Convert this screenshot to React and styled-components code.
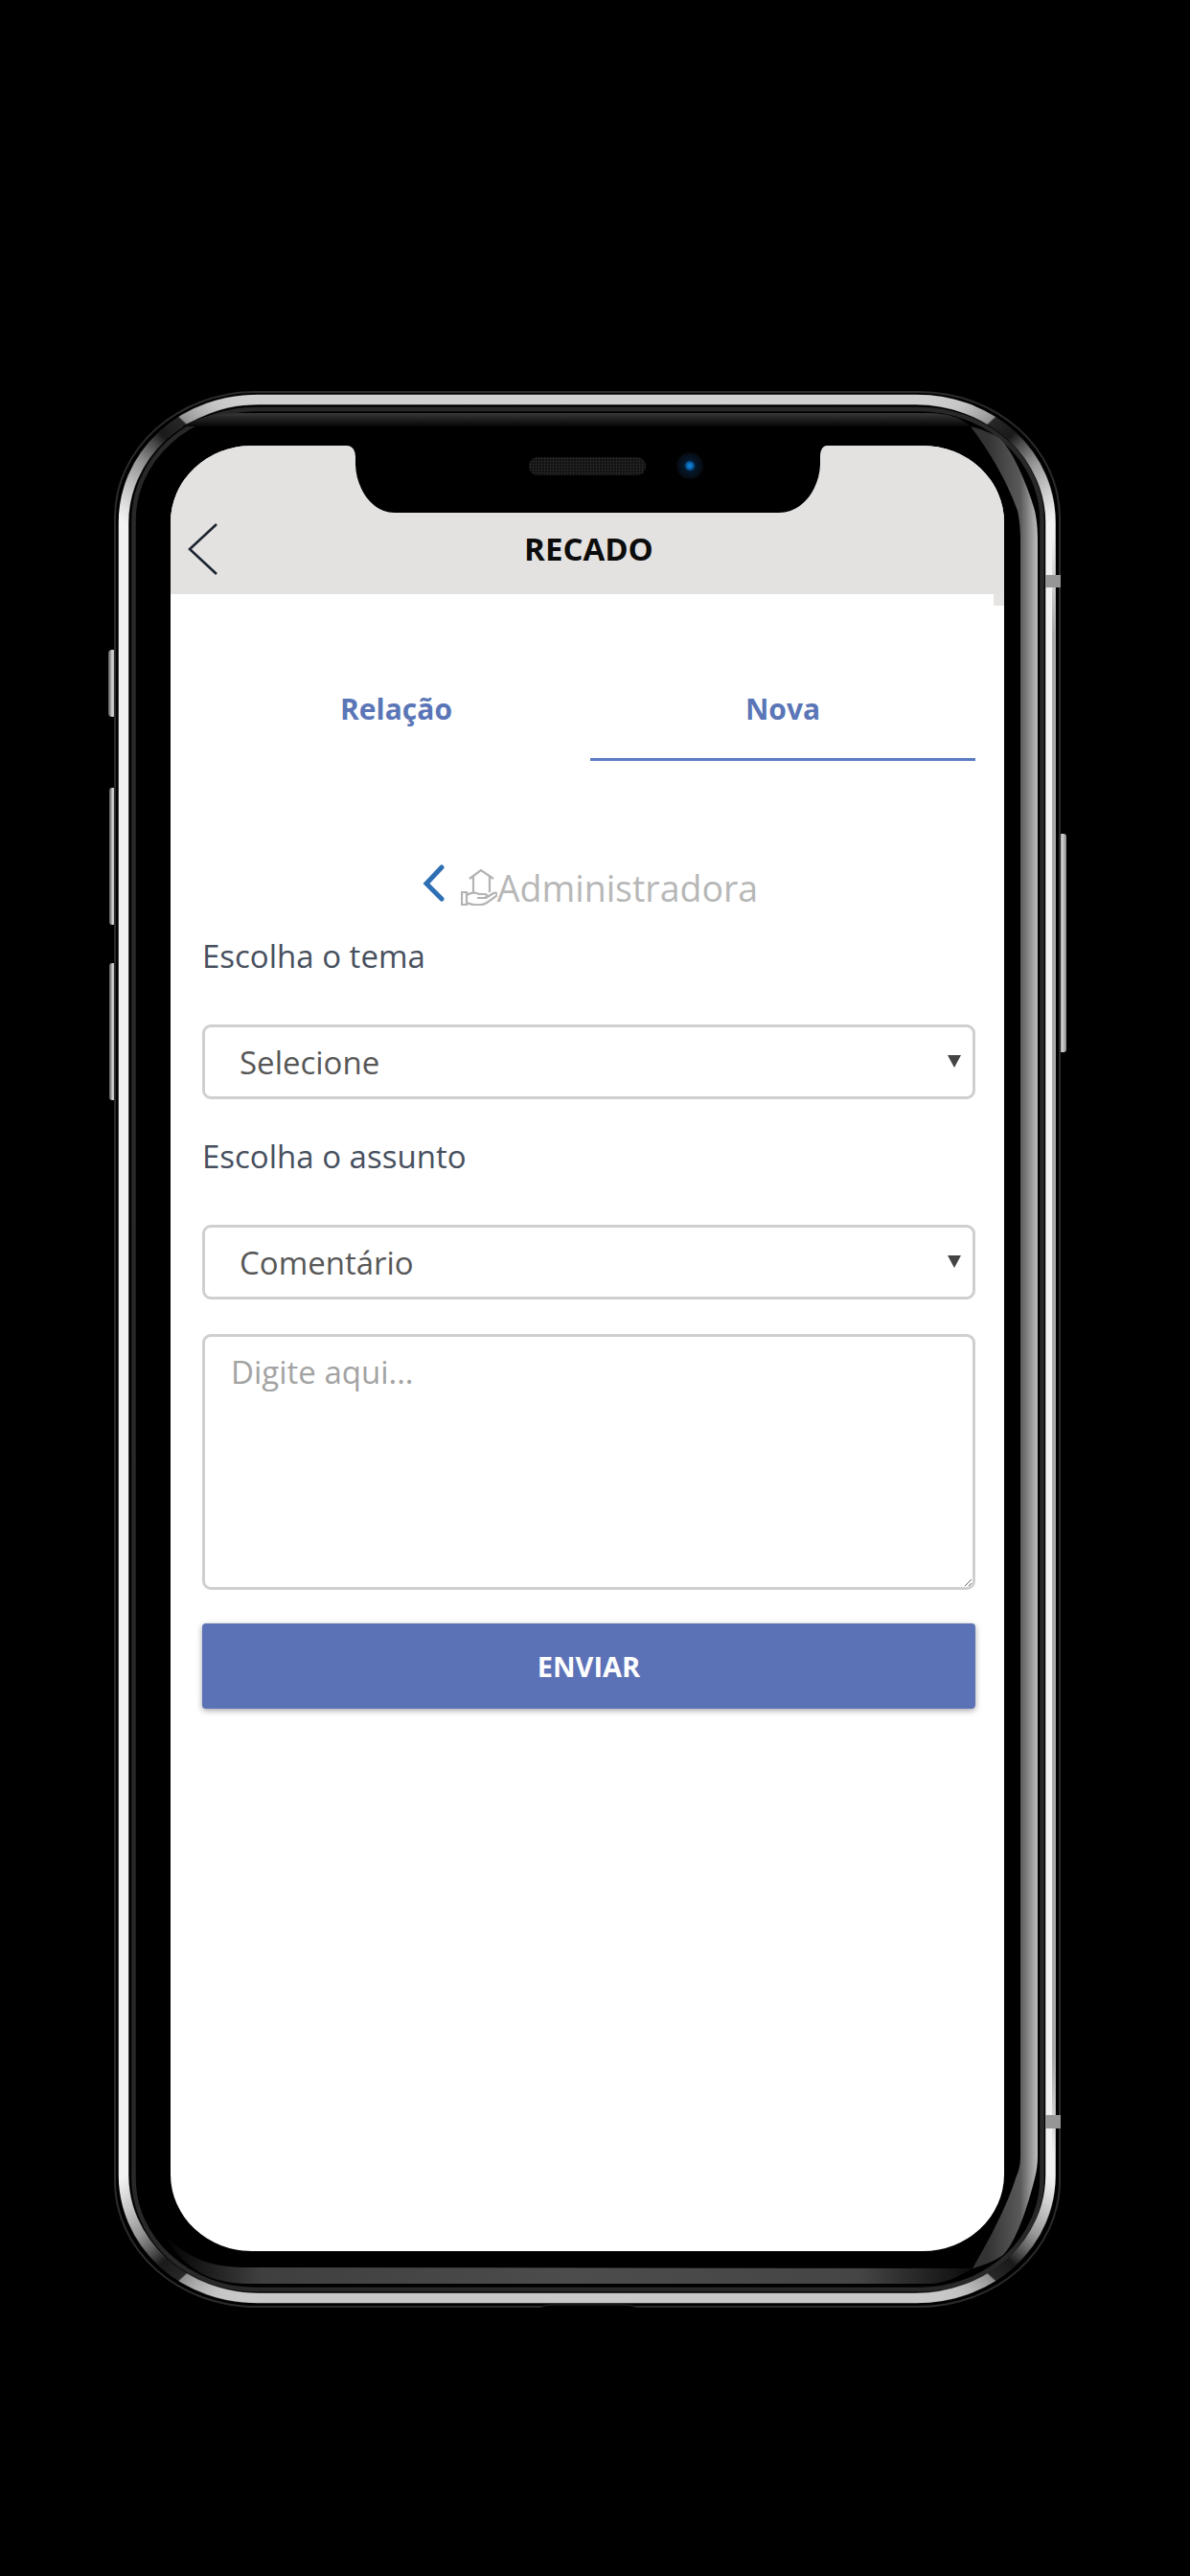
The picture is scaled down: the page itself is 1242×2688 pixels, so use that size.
import React from "react";
import styled, { createGlobalStyle } from "styled-components";

const brand = "#5c72b7";
const tabBlue = "#5a76b7";

const GlobalStyle = createGlobalStyle`
  html, body {
    margin: 0;
    padding: 0;
    background: #000;
  }
  * {
    box-sizing: border-box;
  }
`;

const Page = styled.div`
  width: 1242px;
  height: 2688px;
  padding: 408px 0 0 113px;
  background: #000;
  overflow: hidden;
  font-family: "Open Sans", "Noto Sans", sans-serif;
`;

const Phone = styled.div`
  position: relative;
  width: 1000px;
  height: 2000px;
  padding: 57px 65px 59px 65px;
`;

const FrameArt = styled.svg`
  position: absolute;
  top: 0;
  left: 0;
  width: 1000px;
  height: 2000px;
`;

const Screen = styled.div`
  position: relative;
  width: 870px;
  height: 1884px;
  background: #fff;
  border-radius: 85px / 80px;
  overflow: hidden;
`;

const NotchArt = styled.svg`
  position: absolute;
  top: 0;
  left: 184px;
  width: 501px;
  height: 70px;
`;

const Header = styled.header`
  position: relative;
  height: 155px;
  padding-top: 61px;
  display: grid;
  grid-template-columns: 1fr auto 1fr;
  align-items: center;
  background: #e4e2e0;

  &::after {
    content: "";
    position: absolute;
    right: 0;
    top: 155px;
    width: 11px;
    height: 12px;
    background: #e6e4e2;
  }
`;

const BackButton = styled.svg`
  width: 32px;
  height: 56px;
  margin-left: 17px;
`;

const Title = styled.h1`
  margin: 0 0 0 3px;
  font-size: 33px;
  line-height: 44px;
  font-weight: 700;
  color: #0c0c0c;
`;

const Content = styled.main`
  padding: 74px 30px 0 33px;
`;

const Tabs = styled.nav`
  display: grid;
  grid-template-columns: 405px 402px;
`;

const Tab = styled.div`
  height: 100px;
  padding-top: 24px;
  text-align: center;
  font-size: 30px;
  line-height: 44px;
  font-weight: 700;
  color: ${tabBlue};
  border-bottom: 3px solid ${(props) => (props.$active ? "#5a7cc0" : "transparent")};
`;

const Crumb = styled.div`
  display: flex;
  justify-content: center;
  align-items: center;
  height: 56px;
  margin-top: 104px;
  padding-left: 3px;
  font-size: 37.5px;
  color: #b7b7b7;
`;

const CrumbBack = styled.svg`
  width: 24px;
  height: 40px;
  margin-right: 16px;
  margin-bottom: 8px;
`;

const CrumbIcon = styled.svg`
  width: 38px;
  height: 38px;
`;

const Label = styled.label`
  display: block;
  font-size: 33px;
  line-height: 44px;
  color: #47505e;
  margin: ${(props) => (props.$first ? "22px" : "38px")} 0 49px;
`;

const SelectBox = styled.div`
  position: relative;
  height: 78px;
`;

const Select = styled.select`
  display: block;
  width: 100%;
  height: 100%;
  padding: 0 0 0 36px;
  appearance: none;
  background: #fff;
  border: 3px solid #cfcfcf;
  border-radius: 9px;
  font-family: inherit;
  font-size: 33px;
  color: #575757;
`;

const Caret = styled.svg`
  position: absolute;
  right: 15px;
  top: 32px;
  width: 14px;
  height: 13px;
`;

const MessageBox = styled.textarea`
  display: block;
  width: 100%;
  height: 267px;
  margin-top: 36px;
  padding: 15px 27px;
  background: #fff;
  border: 3px solid #cfcfcf;
  border-radius: 9px;
  outline: none;
  font-family: inherit;
  font-size: 33px;
  line-height: 44px;
  color: #555;

  &::placeholder {
    color: #a3a3a3;
    opacity: 1;
  }
`;

const SendButton = styled.button`
  display: block;
  width: 100%;
  height: 89px;
  margin-top: 35px;
  border: 0;
  border-radius: 4px;
  background: ${brand};
  box-shadow: 0 2px 6px rgba(0, 0, 0, 0.35);
  color: #fff;
  font-family: inherit;
  font-size: 29px;
  font-weight: 700;
`;

// shaded part of the metal band at each corner, drawn once and mirrored
const Corner = ({ transform }) => (
  <path
    d="M129 545 A140 128 0 0 1 269 417"
    fill="none"
    stroke="url(#cornerShade)"
    strokeWidth="11.5"
    transform={transform}
  />
);

const PhoneFrame = () => (
  <FrameArt viewBox="113 408 1000 2000">
    <defs>
      <linearGradient id="band" x1="0" y1="0" x2="0" y2="1">
        <stop offset="0" stopColor="#cfcfcf" />
        <stop offset="0.06" stopColor="#f2f2f2" />
        <stop offset="0.94" stopColor="#f2f2f2" />
        <stop offset="1" stopColor="#c9c9c9" />
      </linearGradient>
      <linearGradient id="bandShade" x1="0" y1="0" x2="0" y2="1">
        <stop offset="0" stopColor="#a8a8a8" stopOpacity="0" />
        <stop offset="0.06" stopColor="#a8a8a8" />
        <stop offset="0.94" stopColor="#a8a8a8" />
        <stop offset="1" stopColor="#a8a8a8" stopOpacity="0" />
      </linearGradient>
      <linearGradient id="cornerShade" x1="0" y1="1" x2="1" y2="0">
        <stop offset="0" stopColor="#999" stopOpacity="0" />
        <stop offset="0.3" stopColor="#777" stopOpacity="0.7" />
        <stop offset="0.5" stopColor="#141414" stopOpacity="0.97" />
        <stop offset="0.63" stopColor="#222" stopOpacity="0.97" />
        <stop offset="0.64" stopColor="#8a8a8a" stopOpacity="0.9" />
        <stop offset="0.82" stopColor="#bbb" stopOpacity="0.5" />
        <stop offset="1" stopColor="#ccc" stopOpacity="0" />
      </linearGradient>
      <linearGradient id="sideGlass" gradientUnits="userSpaceOnUse" x1="1030" y1="0" x2="1083" y2="0">
        <stop offset="0" stopColor="#333" />
        <stop offset="0.66" stopColor="#5a5a5a" />
        <stop offset="1" stopColor="#bdbdbd" />
      </linearGradient>
      <linearGradient id="bottomGlass" gradientUnits="userSpaceOnUse" x1="170" y1="0" x2="1015" y2="0">
        <stop offset="0" stopColor="#000" />
        <stop offset="0.12" stopColor="#3f3f3f" />
        <stop offset="0.5" stopColor="#4c4c4c" />
        <stop offset="0.86" stopColor="#454545" />
        <stop offset="1" stopColor="#0c0c0c" />
      </linearGradient>
      <linearGradient id="topGlass" x1="0" y1="0" x2="0" y2="1">
        <stop offset="0" stopColor="#383838" />
        <stop offset="1" stopColor="#050505" />
      </linearGradient>
      <linearGradient id="sideKey" x1="0" y1="0" x2="1" y2="0">
        <stop offset="0" stopColor="#555" />
        <stop offset="0.45" stopColor="#d4d4d4" />
        <stop offset="1" stopColor="#8a8a8a" />
      </linearGradient>
    </defs>

    <rect x="113" y="678" width="9" height="70" rx="4" fill="url(#sideKey)" />
    <rect x="114" y="822" width="8" height="143" rx="3" fill="url(#sideKey)" />
    <rect x="114" y="1005" width="8" height="143" rx="3" fill="url(#sideKey)" />
    <rect x="1105" y="870" width="8" height="228" rx="3" fill="url(#sideKey)" />

    <rect x="119" y="408" width="988" height="2000" rx="148" ry="132" fill="#2b2b2b" />
    <rect x="121" y="410" width="984" height="1996" rx="146" ry="130" fill="#000" />
    <rect x="129" y="417" width="967.5" height="1981" rx="140" ry="128" fill="none" stroke="url(#band)" strokeWidth="10.5" />
    <Corner />
    <Corner transform="translate(1225.5 0) scale(-1 1)" />
    <Corner transform="translate(0 2815) scale(1 -1)" />
    <Corner transform="translate(1225.5 2815) scale(-1 -1)" />
    <rect x="1098" y="560" width="4" height="1690" fill="url(#bandShade)" />

    <rect x="139.5" y="427" width="948" height="1962" rx="128" ry="116" fill="#000" stroke="#282828" strokeWidth="4.5" />

    <path
      d="M190 445 C205 436 225 431 260 431 L965 431 C990 431 1003 436 1013 445 Z"
      fill="url(#topGlass)"
    />
    <path
      d="M1013 445 C1033 472 1050 500 1062 533 C1064 542 1065 552 1065 565 L1065 2250 C1065 2262 1062 2268 1060 2273 C1055 2290 1040 2325 1015 2367 C1030 2363 1040 2358 1047 2353 C1060 2340 1072 2305 1080 2273 C1082 2265 1083 2258 1083 2250 L1083 565 C1083 552 1082 542 1080 533 C1075 515 1060 473 1043 457 C1035 452 1025 448 1013 445 Z"
      fill="url(#sideGlass)"
    />
    <path
      d="M170 2330 C190 2352 215 2366 255 2366 L1015 2367 C1000 2376 985 2383 970 2383 L260 2383 C215 2383 190 2365 170 2330 Z"
      fill="url(#bottomGlass)"
    />

    <rect x="1091" y="600" width="16" height="13" fill="#969696" />
    <rect x="1091" y="2207" width="16" height="14" fill="#969696" />
    <path d="M564 2408 C570 2404 575 2405 580 2405 L648 2405 C654 2405 658 2404 664 2408" fill="#000" stroke="#1d1d1d" strokeWidth="1.5" />
  </FrameArt>
);

const Notch = () => (
  <NotchArt viewBox="362 465 501 70">
    <defs>
      <pattern id="mesh" width="3" height="3" patternUnits="userSpaceOnUse">
        <rect width="3" height="3" fill="#111" />
        <circle cx="1.5" cy="1.5" r="0.9" fill="#2c2c2c" />
      </pattern>
      <radialGradient id="lens">
        <stop offset="0" stopColor="#1290e6" />
        <stop offset="0.25" stopColor="#0a5ea6" />
        <stop offset="0.42" stopColor="#03192d" />
        <stop offset="1" stopColor="#07090f" />
      </radialGradient>
    </defs>
    <path
      d="M362 465 C367 465 371 469 371 477 L371 485 C372 510 388 535 412 535 L813 535 C838 535 855 510 856 485 L856 477 C856 469 859 465 863 465 Z"
      fill="#000"
    />
    <rect x="552" y="477" width="122" height="19" rx="9" fill="url(#mesh)" />
    <circle cx="720" cy="486" r="14" fill="url(#lens)" />
  </NotchArt>
);

export default function App() {
  return (
    <Page>
      <GlobalStyle />
      <Phone>
        <PhoneFrame />
        <Screen>
          <Header>
            <BackButton viewBox="0 0 32 56">
              <path d="M31 2 L3 28 L31 54" fill="none" stroke="#1b2430" strokeWidth="2.6" />
            </BackButton>
            <Title>RECADO</Title>
          </Header>
          <Content>
            <Tabs>
              <Tab>Relação</Tab>
              <Tab $active>Nova</Tab>
            </Tabs>
            <Crumb>
              <CrumbBack viewBox="0 0 24 40">
                <path d="M20 3 L4 20 L20 36" fill="none" stroke="#2e6fb4" strokeWidth="5" strokeLinecap="round" />
              </CrumbBack>
              <CrumbIcon viewBox="10 10 38 38">
                <g fill="none" stroke="#b3b3b3" strokeWidth="2.2">
                  <path d="M19 20 L31 11 L44 20" />
                  <path d="M23 18 V34 M40 18 V34" />
                  <path d="M11 34 H16 V47 H11 Z" />
                  <path d="M16 37 C20 34 26 34 29 36 H35 C38 36 38 40 34 40 H27" />
                  <path d="M16 45 C24 48 32 48 37 45 L47 38 C49 35 47 34 44 35 L36 40" />
                </g>
              </CrumbIcon>
              Administradora
            </Crumb>
            <Label $first>Escolha o tema</Label>
            <SelectBox>
              <Select defaultValue="Selecione">
                <option>Selecione</option>
              </Select>
              <Caret viewBox="0 0 14 13">
                <path d="M0 0 H14 L7 13 Z" fill="#444" />
              </Caret>
            </SelectBox>
            <Label>Escolha o assunto</Label>
            <SelectBox>
              <Select defaultValue="Comentário">
                <option>Comentário</option>
              </Select>
              <Caret viewBox="0 0 14 13">
                <path d="M0 0 H14 L7 13 Z" fill="#444" />
              </Caret>
            </SelectBox>
            <MessageBox placeholder="Digite aqui..." />
            <SendButton>ENVIAR</SendButton>
          </Content>
          <Notch />
        </Screen>
      </Phone>
    </Page>
  );
}
